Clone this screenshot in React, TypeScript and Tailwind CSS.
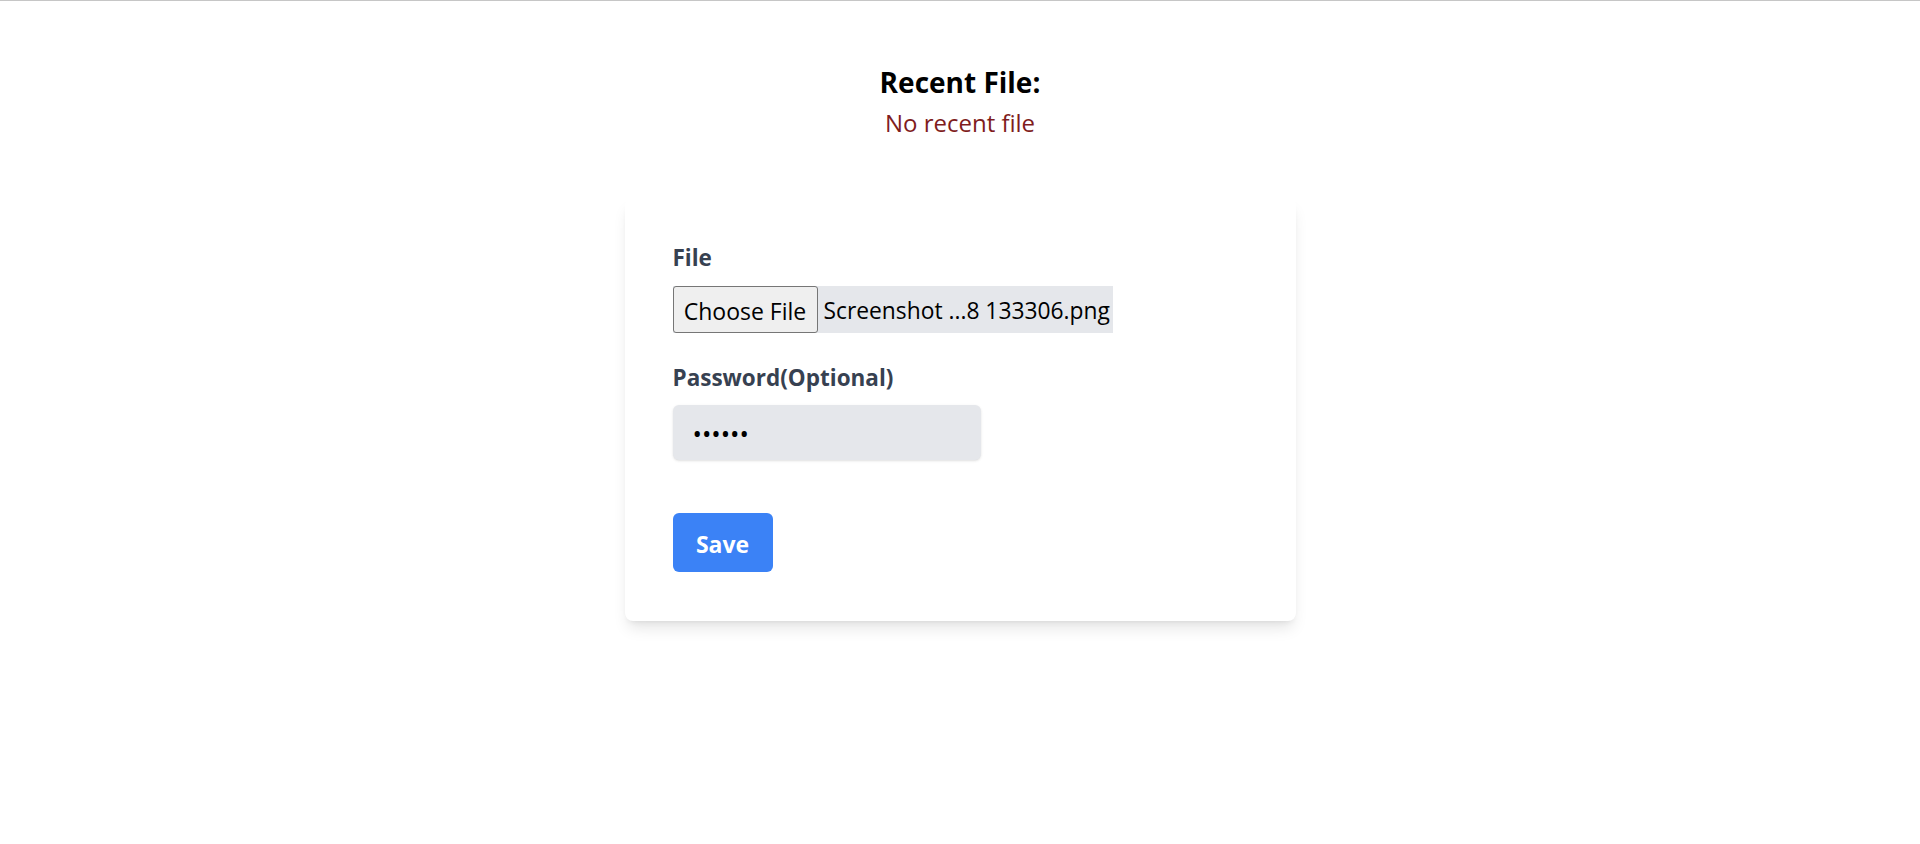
import { useState } from 'react'

export default function App() {
  const [password, setPassword] = useState('123456')

  return (
    <div className="min-h-screen bg-white border-t border-[#c6c6c6] font-['Open_Sans','Noto_Sans',sans-serif]">
      {/* Recent file header */}
      <div className="pt-[63px] text-center">
        <h2 className="text-[28px] leading-[36px] font-bold text-black">Recent File:</h2>
        <p className="mt-[7px] text-[24px] leading-[32px] text-[#7f1d1d]">No recent file</p>
      </div>

      {/* Upload card */}
      <div className="mx-auto mt-[59px] w-[671px] rounded-lg bg-white px-12 pt-[46px] pb-[49px] shadow-[0_10px_15px_-3px_rgba(0,0,0,0.1),0_4px_6px_-4px_rgba(0,0,0,0.1)]">
        <label className="block text-[22.5px] leading-[28px] font-bold text-[#374151]">File</label>
        <div className="mt-[14px] flex h-[47px] w-[440px] items-center bg-[#e5e7eb]">
          <button className="h-[47px] w-[145px] shrink-0 rounded-[3px] border border-[#767676] bg-[#efefef] pt-[3px] text-[23px] text-black">
            Choose File
          </button>
          <span className="ml-[6px] pt-[3px] text-[22.8px] text-black whitespace-nowrap">Screenshot ...8 133306.png</span>
        </div>

        <label className="mt-[31px] block text-[22.5px] leading-[28px] font-bold text-[#374151]">
          Password(Optional)
        </label>
        <input
          type="password"
          value={password}
          onChange={(e) => setPassword(e.target.value)}
          className="mt-[13px] block h-[55px] w-[308px] rounded-md bg-[#e5e7eb] px-5 text-[25px] text-black shadow-sm outline-none"
        />

        <button className="mt-[53px] h-[59px] w-[100px] rounded-md bg-[#3b82f6] pt-[3px] text-[23px] font-bold text-white">
          Save
        </button>
      </div>
    </div>
  )
}
